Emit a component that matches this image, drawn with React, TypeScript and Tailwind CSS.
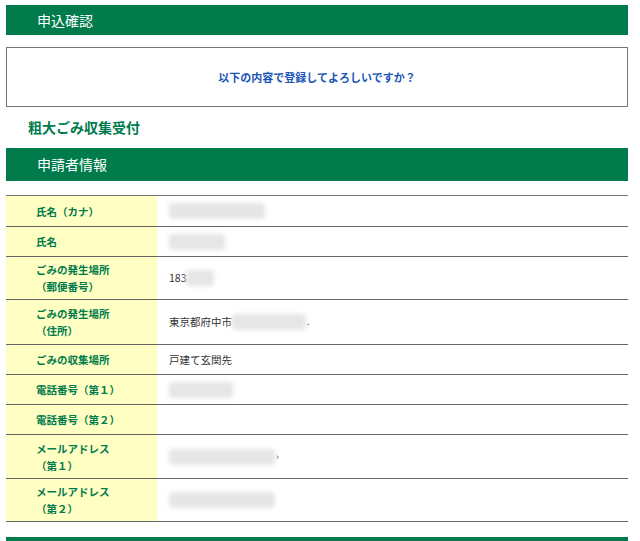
const rows: { label: string[]; h: string; value?: string; blur?: number; tail?: string }[] = [
  { label: ['氏名（カナ）'], h: 'h-[31px]', blur: 96 },
  { label: ['氏名'], h: 'h-[30px]', blur: 56 },
  { label: ['ごみの発生場所', '（郵便番号）'], h: 'h-[43px]', value: '183', blur: 28 },
  { label: ['ごみの発生場所', '（住所）'], h: 'h-[45px]', value: '東京都府中市', blur: 74, tail: '.' },
  { label: ['ごみの収集場所'], h: 'h-[30px]', value: '戸建て玄関先' },
  { label: ['電話番号（第１）'], h: 'h-[30px]', blur: 64 },
  { label: ['電話番号（第２）'], h: 'h-[30px]' },
  { label: ['メールアドレス', '（第１）'], h: 'h-[44px]', blur: 106, tail: '›' },
  { label: ['メールアドレス', '（第２）'], h: 'h-[43px]', blur: 106 },
];

export default function App() {
  return (
    <div className="w-[640px] h-[541px] overflow-hidden bg-white pl-[6px] pt-[5px] text-[#222]" style={{ fontFamily: '"Noto Sans CJK JP", "Noto Sans", sans-serif' }}>
      <div className="w-[622px]">
        <div className="h-[30px] bg-[#007b4c] text-white text-[14px] flex items-center pl-[31px]">申込確認</div>
        <div className="mt-[12px] h-[60px] border border-[#777] flex items-center justify-center text-[11px] font-bold text-[#1a55b5]">
          以下の内容で登録してよろしいですか？
        </div>
        <div className="h-[41px] flex items-center pl-[22px] text-[14px] font-bold text-[#007b4c]">粗大ごみ収集受付</div>
        <div className="h-[33px] bg-[#007b4c] text-white text-[14px] flex items-center pl-[31px]">申請者情報</div>
        <div className="mt-[14px] border-t border-[#777]">
          {rows.map((r, i) => (
            <div key={i} className={`flex border-b border-[#666] ${r.h}`}>
              <div className="w-[151px] bg-[#ffffc4] flex flex-col justify-center pl-[30px] text-[10.5px] font-bold text-[#007b4c] leading-[17px]">
                {r.label.map((l, j) => (
                  <div key={j}>{l}</div>
                ))}
              </div>
              <div className="flex-1 flex items-center pl-[12px] text-[10.5px] text-[#333]">
                {r.value && <span>{r.value}</span>}
                {r.blur && <div className="h-[16px] bg-[#e6e6e6] blur-[2px] rounded" style={{ width: r.blur }} />}
                {r.tail && <span className="text-[9px] ml-[1px]">{r.tail}</span>}
              </div>
            </div>
          ))}
        </div>
        <div className="mt-[15px] h-[10px] bg-[#007b4c]" />
      </div>
    </div>
  );
}
